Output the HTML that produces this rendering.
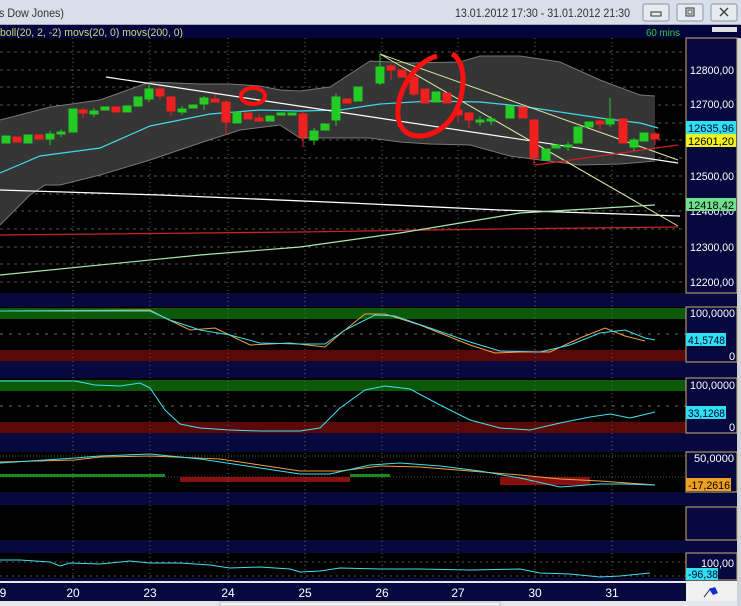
<!DOCTYPE html>
<html><head><meta charset="utf-8"><style>
html,body{margin:0;padding:0;background:#000;}
svg{display:block;font-family:"Liberation Sans",sans-serif;}
</style></head><body>
<svg width="741" height="606" viewBox="0 0 741 606" xmlns="http://www.w3.org/2000/svg">
<rect x="0" y="0" width="741" height="25" fill="#d9dfe8"/>
<rect x="0" y="24" width="741" height="1" fill="#a0a8b8"/>
<text x="-1" y="17" font-size="12" fill="#333" textLength="65" lengthAdjust="spacingAndGlyphs">s Dow Jones)</text>
<text x="455" y="17" font-size="12" fill="#333" textLength="175" lengthAdjust="spacingAndGlyphs">13.01.2012 17:30 - 31.01.2012 21:30</text>
<g fill="#e6ebf2" stroke="#8a94a6"><rect x="643" y="4" width="26" height="17" rx="2"/><rect x="677" y="4" width="26" height="17" rx="2"/><rect x="711" y="4" width="26" height="17" rx="2"/></g>
<rect x="651" y="12" width="10" height="4" fill="none" stroke="#333"/>
<rect x="686" y="8" width="8" height="8" fill="none" stroke="#333"/><rect x="688" y="10" width="4" height="4" fill="none" stroke="#333" stroke-width="0.8"/>
<path d="M720 8l8 8M728 8l-8 8" stroke="#444" stroke-width="1.5"/>
<rect x="0" y="25" width="741" height="13" fill="#04043e"/>
<text x="0" y="36" font-size="11" fill="#d8d870" textLength="183" lengthAdjust="spacingAndGlyphs">boll(20, 2, -2) movs(20, 0) movs(200, 0)</text>
<text x="646" y="36" font-size="10" fill="#2ed02e" textLength="34" lengthAdjust="spacingAndGlyphs">60 mins</text>
<rect x="712" y="27" width="25" height="5" fill="#e0e0e0"/>
<rect x="0" y="293" width="741" height="290" fill="#06083e"/>
<rect x="737" y="38" width="4" height="568" fill="#d0d4dc"/>
<rect x="0" y="38" width="686" height="255" fill="#000"/>
<g stroke="#555" stroke-dasharray="3,4" stroke-width="1">
<path d="M0 52H684M0 70H684M0 87H684M0 105H684M0 123H684M0 140H684M0 158H684M0 176H684M0 194H684M0 211H684M0 229H684M0 247H684M0 264H684M0 282H684"/>
</g>
<g stroke="#666" stroke-dasharray="1,3"><path d="M73 38V293M150 38V293M228 38V293M305 38V293M382 38V293M458 38V293M535 38V293M612 38V293"/></g>
<polygon fill="#3a3a3a" fill-opacity="0.92" points="0,120 50,107 100,100 150,82 200,84 230,84 260,86 280,90 300,91 330,87 370,61 410,63 460,62 480,56 520,56 560,62 600,80 640,95 655,96 655,161 620,164 580,165 540,160 510,156 470,145 430,144 400,142 370,138 330,138 300,138 280,125 240,130 200,143 150,160 100,175 60,185 45,185 30,195 0,225"/>
<polyline fill="none" stroke="#777" points="0,120 50,107 100,100 150,82 200,84 230,84 260,86 280,90 300,91 330,87 370,61 410,63 460,62 480,56 520,56 560,62 600,80 640,95 655,96"/>
<polyline fill="none" stroke="#777" points="655,161 620,164 580,165 540,160 510,156 470,145 430,144 400,142 370,138 330,138 300,138 280,125 240,130 200,143 150,160 100,175 60,185 45,185 30,195 0,225"/>
<polyline fill="none" stroke="#ffffff" stroke-width="1.3" points="0,190 160,195 350,203 500,210 680,216"/>
<polyline fill="none" stroke="#d02020" stroke-width="1.3" points="0,235 300,232 500,229 678,227"/>
<polyline fill="none" stroke="#a8e8b0" stroke-width="1.2" points="0,275 200,255 300,247 400,233 520,213 655,205"/>
<polyline fill="none" stroke="#40d8e8" stroke-width="1.2" points="0,173 40,156 100,148 150,126 210,114 260,110 300,111 340,110 380,104 430,101 480,102 520,106 560,112 600,118 640,123 658,128"/>
<line x1="106" y1="77" x2="678" y2="163" stroke="#fff" stroke-width="1.2"/>
<line x1="380" y1="54" x2="678" y2="226" stroke="#d8f0a0" stroke-width="1"/>
<line x1="380" y1="54" x2="678" y2="160" stroke="#d8f0a0" stroke-width="1"/>
<line x1="535" y1="165" x2="678" y2="145" stroke="#d02020" stroke-width="1.2"/>
<g stroke-width="1">
<g fill="#22cc22" stroke="#22cc22">
<rect x="2" y="136" width="8" height="7"/><rect x="24" y="135" width="8" height="8"/><line x1="50" y1="131" x2="50" y2="145"/><rect x="46" y="134" width="8" height="5"/><rect x="57" y="132" width="8" height="2"/><line x1="61" y1="129" x2="61" y2="137"/>
<rect x="69" y="109" width="8" height="23"/><line x1="94" y1="108" x2="94" y2="117"/><rect x="90" y="111" width="8" height="3"/><rect x="101" y="107" width="8" height="3"/><rect x="123" y="106" width="8" height="6"/><rect x="134" y="97" width="8" height="9"/><line x1="149" y1="83" x2="149" y2="102"/><rect x="145" y="89" width="8" height="10"/>
<line x1="182" y1="106" x2="182" y2="115"/><rect x="178" y="109" width="8" height="3"/><rect x="189" y="105" width="8" height="3"/><line x1="204" y1="96" x2="204" y2="110"/><rect x="200" y="98" width="8" height="6"/>
<rect x="233" y="112" width="8" height="11"/><rect x="266" y="116" width="8" height="5"/><rect x="277" y="113" width="8" height="2"/><rect x="288" y="113" width="8" height="2"/><line x1="314" y1="128" x2="314" y2="145"/><rect x="310" y="131" width="8" height="9"/><rect x="321" y="124" width="8" height="6"/><line x1="336" y1="93" x2="336" y2="126"/><rect x="332" y="97" width="8" height="23"/>
<rect x="354" y="87" width="8" height="14"/><line x1="380" y1="54" x2="380" y2="85"/><rect x="376" y="67" width="8" height="16"/><rect x="432" y="92" width="8" height="10"/>
<line x1="480" y1="116" x2="480" y2="126"/><rect x="476" y="120" width="8" height="2"/><line x1="491" y1="116" x2="491" y2="125"/><rect x="487" y="119" width="8" height="2"/><rect x="506" y="106" width="8" height="12"/>
<rect x="542" y="149" width="8" height="11"/><rect x="552" y="145" width="8" height="3"/><line x1="568" y1="142" x2="568" y2="151"/><rect x="564" y="145" width="8" height="2"/><rect x="574" y="127" width="8" height="16"/><rect x="585" y="122" width="8" height="5"/><line x1="610" y1="98" x2="610" y2="127"/><rect x="606" y="119" width="8" height="5"/><line x1="634" y1="138" x2="634" y2="151"/><rect x="630" y="140" width="8" height="7"/><rect x="640" y="133" width="8" height="8"/>
</g>
<g fill="#ee2020" stroke="#ee2020">
<rect x="13" y="137" width="8" height="5"/><rect x="35" y="135" width="8" height="4"/><line x1="83" y1="108" x2="83" y2="118"/><rect x="79" y="110" width="8" height="3"/><rect x="112" y="107" width="8" height="5"/>
<line x1="160" y1="86" x2="160" y2="100"/><rect x="156" y="89" width="8" height="7"/><line x1="171" y1="96" x2="171" y2="116"/><rect x="167" y="97" width="8" height="14"/><line x1="215" y1="94" x2="215" y2="102"/><rect x="211" y="99" width="8" height="3"/>
<line x1="226" y1="100" x2="226" y2="135"/><rect x="222" y="102" width="8" height="20"/><rect x="244" y="113" width="8" height="6"/><line x1="259" y1="114" x2="259" y2="121"/><rect x="255" y="118" width="8" height="3"/><line x1="303" y1="112" x2="303" y2="147"/><rect x="299" y="114" width="8" height="23"/><rect x="343" y="99" width="8" height="4"/>
<line x1="391" y1="64" x2="391" y2="80"/><rect x="387" y="66" width="8" height="4"/><rect x="398" y="70" width="8" height="7"/><line x1="414" y1="75" x2="414" y2="96"/><rect x="410" y="77" width="8" height="17"/><rect x="421" y="89" width="8" height="14"/><rect x="443" y="93" width="8" height="10"/>
<line x1="458" y1="108" x2="458" y2="122"/><rect x="454" y="110" width="8" height="5"/><line x1="469" y1="112" x2="469" y2="128"/><rect x="465" y="113" width="8" height="7"/><rect x="519" y="107" width="8" height="11"/><line x1="534" y1="119" x2="534" y2="165"/><rect x="530" y="120" width="8" height="38"/><line x1="600" y1="120" x2="600" y2="130"/><rect x="596" y="121" width="8" height="3"/><rect x="619" y="119" width="8" height="24"/><line x1="655" y1="132" x2="655" y2="145"/><rect x="651" y="134" width="8" height="5"/>
</g>
</g>
<ellipse cx="253" cy="96" rx="12" ry="8" fill="none" stroke="#ff1010" stroke-width="4"/>
<path d="M437 56 C414 62 396 92 398 116 C400 142 432 142 450 120 C466 100 468 62 452 54" fill="none" stroke="#ff1010" stroke-width="5"/>
<rect x="686" y="38" width="51" height="255" fill="#06083e" stroke="#c8b070"/>
<g font-size="11" fill="#fff">
<text x="690" y="74" textLength="44" lengthAdjust="spacingAndGlyphs">12800,00</text><text x="690" y="108" textLength="44" lengthAdjust="spacingAndGlyphs">12700,00</text><text x="690" y="180" textLength="44" lengthAdjust="spacingAndGlyphs">12500,00</text><text x="690" y="215" textLength="44" lengthAdjust="spacingAndGlyphs">12400,00</text><text x="690" y="251" textLength="44" lengthAdjust="spacingAndGlyphs">12300,00</text><text x="690" y="286" textLength="44" lengthAdjust="spacingAndGlyphs">12200,00</text>
</g>
<rect x="686" y="121" width="50" height="13" fill="#30e0f0"/><text x="688" y="132" font-size="11" fill="#003" textLength="46" lengthAdjust="spacingAndGlyphs">12635,96</text>
<rect x="686" y="134" width="50" height="13" fill="#f0f020"/><text x="688" y="145" font-size="11" fill="#000" textLength="46" lengthAdjust="spacingAndGlyphs">12601,20</text>
<rect x="686" y="198" width="50" height="13" fill="#70e090"/><text x="688" y="209" font-size="11" fill="#000" textLength="46" lengthAdjust="spacingAndGlyphs">12418,42</text>
<rect x="0" y="307" width="686" height="54" fill="#000"/>
<rect x="0" y="308" width="686" height="11" fill="#0a5a0a"/><rect x="0" y="350" width="686" height="11" fill="#5a0808"/>
<line x1="0" y1="334" x2="686" y2="334" stroke="#666" stroke-dasharray="3,6"/>
<polyline fill="none" stroke="#f0a040" points="0,311 150,310 165,318 190,330 215,328 250,345 290,343 325,347 340,334 365,314 385,314 420,325 470,345 495,353 520,352 550,352 580,338 605,328 625,336 645,341"/>
<polyline fill="none" stroke="#40e0f0" points="0,311 150,311 170,320 200,330 230,335 260,343 300,344 325,344 345,330 375,315 395,316 430,328 470,342 500,351 540,352 570,345 600,333 625,330 645,338 655,340"/>
<rect x="686" y="307" width="51" height="55" fill="#06083e" stroke="#c8b070"/>
<text x="690" y="317" font-size="11" fill="#fff" textLength="45" lengthAdjust="spacingAndGlyphs">100,0000</text>
<rect x="686" y="333" width="40" height="13" fill="#30e0f0"/><text x="688" y="344" font-size="11" fill="#003" textLength="37" lengthAdjust="spacingAndGlyphs">41,5748</text>
<text x="729" y="360" font-size="11" fill="#fff">0</text>
<rect x="0" y="378" width="686" height="55" fill="#000"/>
<rect x="0" y="380" width="686" height="11" fill="#0a5a0a"/><rect x="0" y="422" width="686" height="11" fill="#5a0808"/>
<line x1="0" y1="406" x2="686" y2="406" stroke="#666" stroke-dasharray="3,6"/>
<polyline fill="none" stroke="#40e0f0" points="0,381 75,381 95,385 120,386 140,383 150,388 165,410 180,424 200,428 230,430 260,431 300,431 320,428 340,408 365,390 385,386 410,389 440,405 470,420 500,428 530,430 560,423 590,417 610,414 630,418 655,412"/>
<rect x="686" y="378" width="51" height="55" fill="#06083e" stroke="#c8b070"/>
<text x="690" y="389" font-size="11" fill="#fff" textLength="45" lengthAdjust="spacingAndGlyphs">100,0000</text>
<rect x="686" y="406" width="40" height="13" fill="#30e0f0"/><text x="688" y="417" font-size="11" fill="#003" textLength="37" lengthAdjust="spacingAndGlyphs">33,1268</text>
<text x="729" y="431" font-size="11" fill="#fff">0</text>
<rect x="0" y="452" width="686" height="40" fill="#000"/>
<line x1="0" y1="456" x2="686" y2="456" stroke="#555" stroke-dasharray="1,2"/>
<line x1="0" y1="477" x2="686" y2="477" stroke="#555" stroke-dasharray="1,2"/>
<rect x="0" y="474" width="165" height="3" fill="#1a8a1a"/>
<rect x="180" y="477" width="170" height="5" fill="#8a1010"/>
<rect x="350" y="474" width="40" height="3" fill="#1a8a1a"/>
<rect x="500" y="477" width="90" height="8" fill="#8a1010"/>
<polyline fill="none" stroke="#f0a040" points="0,462 75,460 100,457 150,456 220,459 260,465 300,471 340,471 380,466 420,467 470,471 520,475 560,479 600,481 655,485"/>
<polyline fill="none" stroke="#40e0f0" points="0,463 75,458 100,456 150,454 200,459 260,468 300,474 330,474 370,465 400,463 440,466 480,471 520,478 560,487 600,484 625,484 655,485"/>
<rect x="686" y="452" width="51" height="40" fill="#06083e" stroke="#c8b070"/>
<text x="694" y="462" font-size="11" fill="#fff" textLength="40" lengthAdjust="spacingAndGlyphs">50,0000</text>
<rect x="686" y="478" width="45" height="13" fill="#f0a020"/><text x="688" y="489" font-size="11" fill="#000" textLength="42" lengthAdjust="spacingAndGlyphs">-17,2616</text>
<rect x="0" y="505" width="686" height="35" fill="#000"/>
<rect x="686" y="507" width="51" height="33" fill="#06083e" stroke="#c8b070"/>
<rect x="0" y="553" width="686" height="25" fill="#000"/>
<line x1="0" y1="562" x2="686" y2="562" stroke="#555" stroke-dasharray="2,4"/>
<line x1="0" y1="576" x2="686" y2="576" stroke="#555" stroke-dasharray="2,4"/>
<polyline fill="none" stroke="#40e0f0" points="0,560 20,560 50,562 60,566 70,563 100,564 130,561 150,563 180,563 210,565 230,568 260,567 290,569 300,572 320,571 340,568 380,569 420,569 470,570 520,569 540,573 570,574 600,577 620,576 650,573"/>
<rect x="686" y="553" width="51" height="27" fill="#06083e" stroke="#c8b070"/>
<text x="701" y="567" font-size="11" fill="#fff" textLength="33" lengthAdjust="spacingAndGlyphs">100,00</text>
<rect x="686" y="568" width="32" height="12" fill="#30e0f0"/><text x="688" y="578" font-size="11" fill="#003" textLength="30" lengthAdjust="spacingAndGlyphs">-96,38</text>
<g stroke="#666" stroke-dasharray="1,3"><path d="M73 293V583M150 293V583M228 293V583M305 293V583M382 293V583M458 293V583M535 293V583M612 293V583"/></g>
<rect x="0" y="581" width="686" height="2" fill="#e8e8e8"/>
<rect x="0" y="583" width="686" height="18" fill="#06083e"/>
<g font-size="12" fill="#fff" text-anchor="middle">
<text x="3" y="597">9</text><text x="73" y="597">20</text><text x="150" y="597">23</text><text x="228" y="597">24</text><text x="305" y="597">25</text><text x="382" y="597">26</text><text x="458" y="597">27</text><text x="535" y="597">30</text><text x="612" y="597">31</text>
</g>
<rect x="686" y="581" width="51" height="20" fill="#f0f0f0"/>
<path d="M704 597L711 588" stroke="#223" stroke-width="1"/><path d="M709 589L715 587L718 593L713 595Z" fill="#1030d0"/>
<rect x="0" y="601" width="737" height="5" fill="#e4e6ea"/>
<rect x="220" y="602" width="280" height="4" fill="#f4f4f4" stroke="#bbb"/>
</svg>
</body></html>
